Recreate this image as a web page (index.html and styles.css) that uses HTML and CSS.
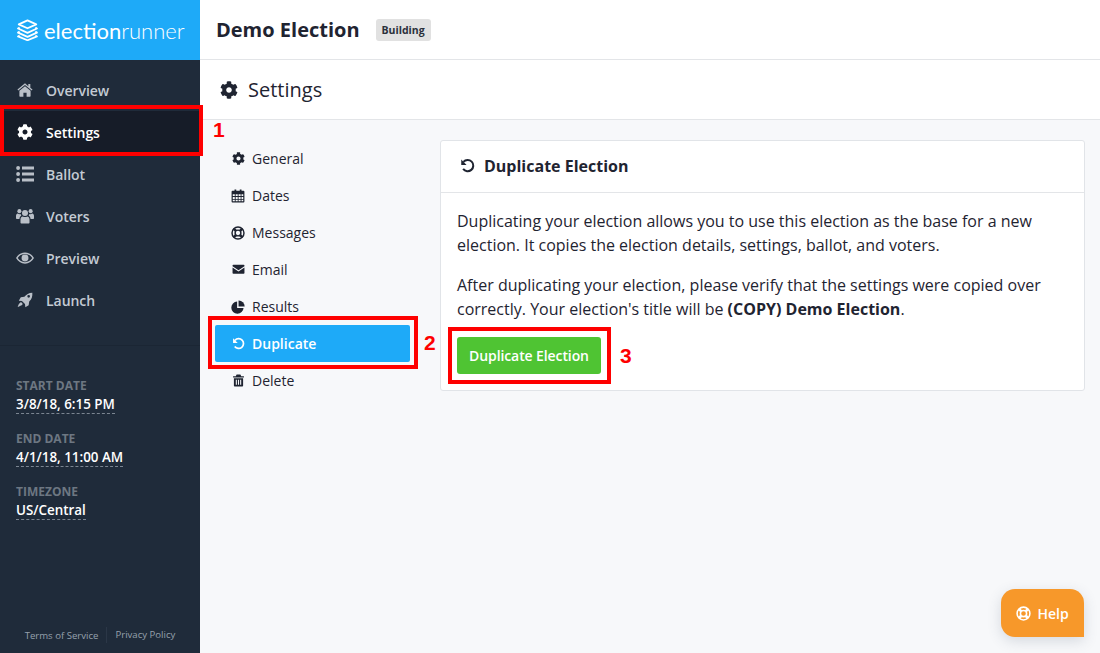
FILE: index.html
```html
<!DOCTYPE html>
<html lang="en">
<head>
<meta charset="utf-8">
<title>Demo Election - Settings</title>
<link rel="stylesheet" href="styles.css">
</head>
<body>
<svg class="defs" width="0" height="0" aria-hidden="true">
  <symbol id="i-cog" viewBox="0 0 512 512"><path d="M487.4 315.7l-42.6-24.6c4.3-23.2 4.3-47 0-70.2l42.6-24.6c4.9-2.8 7.1-8.6 5.5-14-11.1-35.6-30-67.8-54.7-94.6-3.8-4.1-10-5.1-14.8-2.3L380.8 110c-17.9-15.4-38.5-27.3-60.8-35.1V25.8c0-5.6-3.9-10.5-9.4-11.7-36.7-8.2-74.3-7.8-109.2 0-5.5 1.2-9.4 6.1-9.4 11.7V75c-22.2 7.9-42.8 19.8-60.8 35.1L88.7 85.5c-4.9-2.8-11-1.9-14.8 2.3-24.7 26.7-43.6 58.9-54.7 94.6-1.7 5.4.6 11.2 5.5 14L67.3 221c-4.3 23.2-4.3 47 0 70.2l-42.6 24.6c-4.9 2.8-7.1 8.6-5.5 14 11.1 35.6 30 67.8 54.7 94.6 3.8 4.1 10 5.1 14.8 2.3l42.6-24.6c17.9 15.4 38.5 27.3 60.8 35.1v49.2c0 5.6 3.9 10.5 9.4 11.7 36.7 8.2 74.3 7.8 109.2 0 5.5-1.2 9.4-6.1 9.4-11.7v-49.2c22.2-7.9 42.8-19.8 60.8-35.1l42.6 24.6c4.9 2.8 11 1.9 14.8-2.3 24.7-26.7 43.6-58.9 54.7-94.6 1.5-5.5-.7-11.3-5.6-14.1zM256 336c-44.1 0-80-35.9-80-80s35.9-80 80-80 80 35.9 80 80-35.9 80-80 80z"/></symbol>
  <symbol id="i-home" viewBox="0 0 24 24"><path d="M12 6.200 3.600 13.100V21a1 1 0 0 0 1 1h5v-6h4.800v6h5a1 1 0 0 0 1-1v-7.900z"/><path d="M17 3h3v5.600l3.300 2.800-1.200 1.400L12 4.400 1.900 12.800.7 11.400 12 2l5 4.200z"/></symbol>
  <symbol id="i-list" viewBox="0 0 24 24"><circle cx="2.800" cy="4" r="2.600"/><circle cx="2.800" cy="12" r="2.600"/><circle cx="2.800" cy="20" r="2.600"/><path d="M8 2h16v4H8zM8 10h16v4H8zM8 18h16v4H8z"/></symbol>
  <symbol id="i-users" viewBox="0 0 24 24"><circle cx="12" cy="8" r="4"/><circle cx="4.500" cy="5.500" r="2.700"/><circle cx="19.500" cy="5.500" r="2.700"/><path d="M6 21v-4.500C6 14 7.500 12.800 9 12.600c1.800 1 4.200 1 6 0 1.500.2 3 1.400 3 3.900V21c0 .6-.5 1-1 1H7c-.5 0-1-.4-1-1z"/><path d="M0 15v-3c0-2 1-3 2.500-3.200 1 .8 2.500 1 3.700.6.100.8.400 1.600.9 2.200C5.500 12.500 4.700 13.700 4.600 16H1c-.6 0-1-.4-1-1zM24 15v-3c0-2-1-3-2.500-3.200-1 .8-2.500 1-3.700.6-.1.8-.4 1.600-.9 2.200 1.600.9 2.400 2.100 2.500 4.400H23c.6 0 1-.4 1-1z"/></symbol>
  <symbol id="i-eye" viewBox="0 0 24 24"><path fill-rule="evenodd" d="M12 4.500C6.800 4.500 2.600 7.500 0 12c2.600 4.500 6.800 7.500 12 7.500s9.400-3 12-7.500c-2.600-4.500-6.800-7.500-12-7.500zM12 6.500c-4 0-7.400 2.100-9.700 5.500 2.300 3.400 5.700 5.500 9.700 5.500s7.400-2.100 9.700-5.500C19.400 8.600 16 6.500 12 6.500z"/><circle cx="12" cy="12" r="4.600"/></symbol>
  <symbol id="i-rocket" viewBox="0 0 24 24"><path fill-rule="evenodd" d="M23 1c.5 5.500-1 10-4.700 13.400l-.8 5.400-5 3-.5-4.700-4.600-4.600-4.700-.5 3-5 5.400-.8C14 3.500 17.500 1 23 1zM17.500 4.500a2 2 0 1 0 0 4 2 2 0 0 0 0-4z"/><path d="M5.500 15.500c1.500-.5 2.800 1.500 3 3-1.500 2-5 3-7.500 4 .8-2.500 2-5.500 4.500-7z"/></symbol>
  <symbol id="i-cal" viewBox="0 0 24 24"><path fill-rule="evenodd" d="M2.500 3H6V1h3v2h6V1h3v2h3.500A1.500 1.500 0 0 1 23 4.500v17a1.500 1.500 0 0 1-1.500 1.500h-19A1.500 1.500 0 0 1 1 21.500v-17A1.500 1.500 0 0 1 2.500 3zM3 9v3h3.500V9zM8 9v3h3.500V9zM13 9v3h3.500V9zM18 9v3h3V9zM3 13.500V17h3.500v-3.500zM8 13.500V17h3.500v-3.500zM13 13.500V17h3.500v-3.500zM18 13.500V17h3v-3.500zM3 18.500V21h3.500v-2.500zM8 18.500V21h3.500v-2.500zM13 18.500V21h3.500v-2.500zM18 18.500V21h3v-2.500z"/></symbol>
  <symbol id="i-ring" viewBox="0 0 24 24"><path fill-rule="evenodd" d="M12 .5a11.500 11.500 0 1 0 0 23 11.500 11.500 0 0 0 0-23zM12 3a9 9 0 1 1 0 18 9 9 0 0 1 0-18z"/><path fill-rule="evenodd" d="M12 5.800a6.200 6.200 0 1 0 0 12.400 6.200 6.200 0 0 0 0-12.400zM12 8.300a3.700 3.700 0 1 1 0 7.400 3.700 3.700 0 0 1 0-7.400z"/><path d="M6 2.800 10 7 7 10 2.800 6zM18 2.800 21.200 6 17 10l-3-3zM21.200 18 18 21.200 14 17l3-3zM6 21.200 2.800 18 7 14l3 3z"/></symbol>
  <symbol id="i-mail" viewBox="0 0 24 24"><path d="M1 4.500A1.500 1.500 0 0 1 2.500 3h19A1.500 1.500 0 0 1 23 4.500v1.300l-11 7.400L1 5.800z"/><path d="M1 8.500l11 7.300 11-7.300v10A1.500 1.500 0 0 1 21.500 20h-19A1.500 1.500 0 0 1 1 18.500z"/></symbol>
  <symbol id="i-pie" viewBox="0 0 24 24"><path d="M10.500 2.500a10.500 10.500 0 1 0 11 11H10.500z"/><path d="M13 .8A10.300 10.300 0 0 1 23.500 11H13z"/></symbol>
  <symbol id="i-undo" viewBox="0 0 24 24"><path fill="none" stroke="currentColor" stroke-width="3.200" d="M5.500 6.200A9 9 0 1 1 5 17.500"/><path d="M2 2.500 10.500 11H2z"/></symbol>
  <symbol id="i-trash" viewBox="0 0 24 24"><path fill-rule="evenodd" d="M8.500 1h7L17 4h5v2.500H2V4h5zM3.500 8h17v13.500a1.500 1.500 0 0 1-1.500 1.500H5a1.500 1.500 0 0 1-1.500-1.500zM7 10.500V20h2v-9.500zM11 10.500V20h2v-9.500zM15 10.500V20h2v-9.500z"/></symbol>
  <symbol id="i-logo" viewBox="0 0 24 24"><g fill="none" stroke="currentColor" stroke-width="2.100" stroke-linejoin="round"><path d="M12 1 22 5.500 12 10 2 5.500z"/><path d="M3 9.200 1.200 10.300 12 15.200 22.800 10.300 21 9.200"/><path d="M3 13.800 1.200 15 12 19.800 22.800 15 21 13.800"/><path d="M3 18.300 1.200 19.400 12 23.700 22.800 19.400 21 18.300"/></g></symbol>
</svg>

<div class="app">
  <aside class="sidebar">
    <div class="brand">
      <svg class="brand-icon"><use href="#i-logo"/></svg>
      <span class="brand-name">election<span class="brand-thin">runner</span></span>
    </div>
    <nav class="side-nav">
      <a class="side-link"><svg class="side-icon"><use href="#i-home"/></svg>Overview</a>
      <a class="side-link is-active"><svg class="side-icon"><use href="#i-cog"/></svg>Settings</a>
      <a class="side-link"><svg class="side-icon side-icon-wide"><use href="#i-list"/></svg>Ballot</a>
      <a class="side-link"><svg class="side-icon side-icon-wide"><use href="#i-users"/></svg>Voters</a>
      <a class="side-link"><svg class="side-icon side-icon-wide"><use href="#i-eye"/></svg>Preview</a>
      <a class="side-link"><svg class="side-icon"><use href="#i-rocket"/></svg>Launch</a>
    </nav>
    <div class="meta">
      <div class="meta-group">
        <div class="meta-label">START DATE</div>
        <span class="meta-value">3/8/18, 6:15 PM</span>
      </div>
      <div class="meta-group">
        <div class="meta-label">END DATE</div>
        <span class="meta-value">4/1/18, 11:00 AM</span>
      </div>
      <div class="meta-group">
        <div class="meta-label">TIMEZONE</div>
        <span class="meta-value">US/Central</span>
      </div>
    </div>
    <footer class="side-foot">
      <a class="foot-link">Terms of Service</a>
      <a class="foot-link foot-link-split">Privacy Policy</a>
    </footer>
  </aside>

  <main class="main">
    <header class="topbar">
      <h1 class="title">Demo Election</h1>
      <span class="badge">Building</span>
    </header>
    <div class="pagebar">
      <svg class="pagebar-icon"><use href="#i-cog"/></svg>
      <h2 class="pagebar-title">Settings</h2>
    </div>
    <div class="content">
      <nav class="sub-nav">
        <a class="sub-link"><svg class="sub-icon"><use href="#i-cog"/></svg>General</a>
        <a class="sub-link"><svg class="sub-icon sub-icon-lg"><use href="#i-cal"/></svg>Dates</a>
        <a class="sub-link"><svg class="sub-icon sub-icon-lg"><use href="#i-ring"/></svg>Messages</a>
        <a class="sub-link"><svg class="sub-icon"><use href="#i-mail"/></svg>Email</a>
        <a class="sub-link"><svg class="sub-icon sub-icon-lg"><use href="#i-pie"/></svg>Results</a>
        <a class="sub-link is-active"><svg class="sub-icon"><use href="#i-undo"/></svg>Duplicate</a>
        <a class="sub-link"><svg class="sub-icon"><use href="#i-trash"/></svg>Delete</a>
      </nav>
      <section class="card">
        <div class="card-head">
          <svg class="card-icon"><use href="#i-undo"/></svg>
          <h3 class="card-title">Duplicate Election</h3>
        </div>
        <div class="card-body">
          <p class="para">Duplicating your election allows you to use this election as the base for a new election. It copies the election details, settings, ballot, and voters.</p>
          <p class="para">After duplicating your election, please verify that the settings were copied over correctly. Your election's title will be <strong>(COPY) Demo Election</strong>.</p>
          <button class="btn-green" type="button">Duplicate Election</button>
        </div>
      </section>
    </div>
  </main>
</div>

<div class="mark mark-1"></div><span class="mark-num num-1">1</span>
<div class="mark mark-2"></div><span class="mark-num num-2">2</span>
<div class="mark mark-3"></div><span class="mark-num num-3">3</span>

<button class="help" type="button"><svg class="help-icon"><use href="#i-ring"/></svg>Help</button>
</body>
</html>
```

FILE: styles.css
```css
* { box-sizing: border-box; }
html, body { margin: 0; height: 100%; }
body {
  position: relative;
  width: 1100px;
  height: 653px;
  overflow: hidden;
  font-family: "Open Sans", "Liberation Sans", sans-serif;
  color: #1f2b3a;
  background: #f7f8fa;
}
.defs { position: absolute; }
.app { display: flex; height: 653px; }

.sidebar {
  width: 200px;
  flex: none;
  display: flex;
  flex-direction: column;
  background: #1f2b3a;
}
.brand {
  height: 60px;
  flex: none;
  display: flex;
  align-items: center;
  gap: 6px;
  padding-left: 17px;
  background: #1eaaf8;
  color: #fff;
}
.brand-icon { width: 21px; height: 22px; color: #fff; }
.brand-name {
  font-family: "Lato", sans-serif;
  font-size: 22px;
  font-weight: 400;
  color: #fff;
}
.brand-thin { font-weight: 300; }

.side-nav {
  display: flex;
  flex-direction: column;
  padding: 9px 0 24px;
  border-bottom: 1px solid #1b2634;
}
.side-link {
  height: 42px;
  display: flex;
  align-items: center;
  padding-left: 16px;
  font-size: 14px;
  font-weight: 600;
  letter-spacing: -.04px;
  color: #c3cad3;
}
.side-link.is-active { background: #161c28; color: #fff; }
.side-icon { width: 16px; height: 16px; margin: 0 13px 0 1px; fill: #b9bfc7; }
.side-icon-wide { width: 18px; height: 18px; margin: 0 12px 0 0; }
.is-active .side-icon { fill: #fff; }

.meta { padding: 32px 16px 0; flex: 1; }
.meta-group { height: 53px; }
.meta-label {
  font-size: 12px;
  line-height: 16px;
  font-weight: 700;
  color: #6d7782;
}
.meta-value {
  display: block;
  width: fit-content;
  margin-top: 2px;
  font-size: 13.4px;
  line-height: 17px;
  font-weight: 600;
  color: #fff;
  border-bottom: 1px dashed #7b8591;
}
.side-foot {
  display: flex;
  justify-content: center;
  align-items: center;
  height: 16px;
  margin-bottom: 10px;
  font-size: 9.6px;
  font-weight: 400;
  color: #95a0ac;
}
.foot-link-split {
  margin-left: 8px;
  padding-left: 8px;
  border-left: 1px solid #2b3747;
  line-height: 16px;
}

.main { flex: 1; display: flex; flex-direction: column; min-width: 0; }
.topbar {
  height: 60px;
  flex: none;
  display: flex;
  align-items: center;
  gap: 16px;
  padding-left: 16px;
  background: #fff;
  border-bottom: 1px solid #e3e5e8;
}
.title { margin: 0; font-size: 20px; font-weight: 700; color: #1f2431; }
.badge {
  font-size: 10.5px;
  font-weight: 700;
  line-height: 22px;
  height: 22px;
  padding: 0 6px;
  border-radius: 3px;
  background: #e1e1e1;
  color: #2b303a;
}
.pagebar {
  height: 60px;
  flex: none;
  display: flex;
  align-items: center;
  gap: 10px;
  padding-left: 20px;
  background: #fff;
  border-bottom: 1px solid #e3e5e8;
}
.pagebar-icon { width: 18px; height: 18px; fill: #1f2431; }
.pagebar-title { margin: 0; font-size: 20px; font-weight: 400; color: #1f2431; }

.content { flex: 1; display: flex; padding: 20px 15px 0; align-items: flex-start; gap: 30px; }
.sub-nav { width: 195px; flex: none; display: flex; flex-direction: column; }
.sub-link {
  height: 37px;
  display: flex;
  align-items: center;
  padding-left: 17px;
  font-size: 14px;
  color: #1f2431;
  border-radius: 2px;
}
.sub-link.is-active { background: #1eaaf8; color: #fff; font-weight: 600; }
.sub-icon { width: 13px; height: 13px; margin-right: 7px; fill: #1f2431; color: #1f2431; }
.sub-icon-lg { width: 14px; height: 14px; margin: 0 7px 0 -1px; }
.is-active .sub-icon { fill: #fff; color: #fff; }

.card {
  width: 645px;
  flex: none;
  background: #fff;
  border: 1px solid #e1e4e8;
  border-radius: 3px;
}
.card-head {
  height: 52px;
  display: flex;
  align-items: center;
  gap: 9px;
  padding: 0 0 2px 19px;
  border-bottom: 1px solid #e3e5e8;
}
.card-icon { width: 15px; height: 15px; fill: #1f2431; color: #1f2431; }
.card-title { margin: 0; font-size: 16px; font-weight: 700; color: #1f2431; }
.card-body { padding: 16px 16px 16px; }
.para { margin: 0 0 16px; font-size: 16px; line-height: 24px; color: #1f2431; }
.btn-green {
  display: block;
  width: 144px;
  height: 37px;
  padding: 0;
  border: 0;
  border-radius: 3px;
  background: #4fc433;
  color: #fff;
  font-family: inherit;
  font-size: 14px;
  font-weight: 600;
  letter-spacing: -.1px;
}

.mark { position: absolute; border: 4px solid #fe0000; }
.mark-1 { left: 0; top: 105px; width: 203px; height: 51px; }
.mark-2 { left: 208px; top: 316px; width: 210px; height: 53px; }
.mark-3 { left: 448px; top: 327px; width: 163px; height: 57px; }
.mark-num {
  position: absolute;
  font-family: "Liberation Sans", sans-serif;
  font-size: 21px;
  font-weight: 700;
  line-height: 24px;
  color: #fe0000;
}
.num-1 { left: 213px; top: 118px; }
.num-2 { left: 424px; top: 331px; }
.num-3 { left: 620px; top: 344px; }

.help {
  position: absolute;
  left: 1001px;
  top: 589px;
  width: 83px;
  height: 48px;
  display: flex;
  align-items: center;
  justify-content: center;
  gap: 6px;
  padding: 0;
  border: 0;
  border-radius: 14px 14px 0 14px;
  background: #f7982a;
  color: #fff;
  font-family: inherit;
  font-size: 14px;
  font-weight: 600;
  box-shadow: 0 4px 14px rgba(60, 80, 100, .18);
}
.help-icon { width: 15px; height: 15px; fill: #fff; }
```
